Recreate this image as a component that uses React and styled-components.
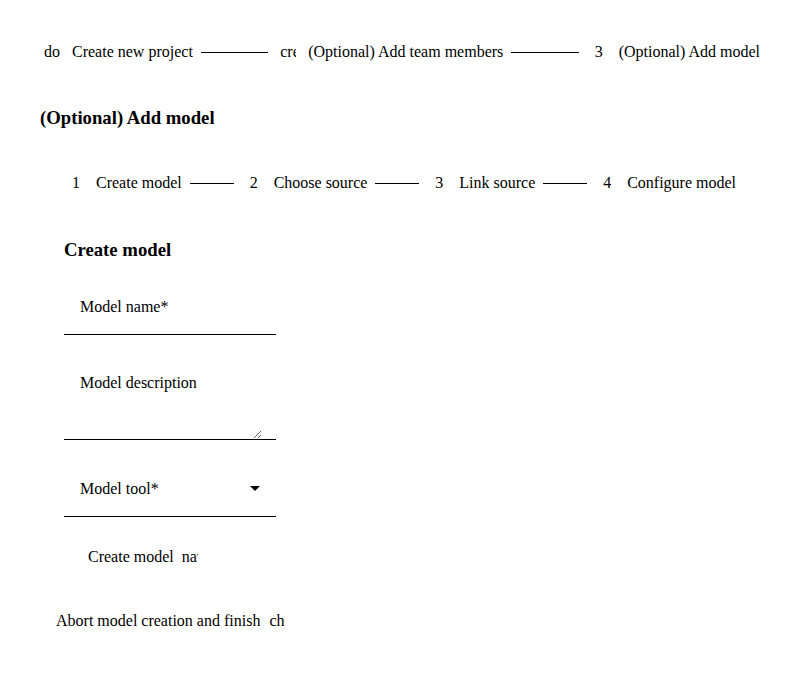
import React from "react";
import styled, { createGlobalStyle } from "styled-components";

const Global = createGlobalStyle`
  html, body { margin: 0; padding: 0; background: #fff; }
  body { font-family: "Liberation Serif", "Times New Roman", serif; color: #000; font-size: 16px; }
`;

const Page = styled.div`
  padding: 16px 40px 0 40px;
  display: flex;
  flex-direction: column;
`;

const Stepper = styled.div`
  display: flex;
  align-items: center;
  height: 72px;
  gap: 8px;
`;

const StepIcon = styled.span`
  width: 24px;
  height: 24px;
  flex: none;
  display: flex;
  align-items: center;
  justify-content: center;
  font-size: 16px;
  line-height: 1;
`;

const IconGlyph = styled.span`
  width: 16px;
  height: 16px;
  overflow: hidden;
  white-space: nowrap;
  display: inline-block;
  font-size: 16px;
  line-height: 16px;
`;

const StepLabel = styled.span`
  white-space: nowrap;
  font-size: 16px;
`;

const Line = styled.span`
  flex: 1;
  height: 1px;
  background: #000;
`;

const Heading = styled.h3`
  margin: ${(p) => p.$top || 0}px 0 ${(p) => p.$bottom || 0}px 0;
  font-size: 18.72px;
  font-weight: bold;
  line-height: 22px;
`;

const Content = styled.div`
  display: flex;
  flex-direction: column;
  padding: 0 24px;
`;

const Field = styled.label`
  width: 212px;
  min-height: 55px;
  border-bottom: 1px solid #000;
  display: flex;
  flex-direction: column;
  margin-bottom: ${(p) => p.$gap || 20}px;
`;

const FieldRow = styled.div`
  height: 55px;
  display: flex;
  align-items: center;
  justify-content: space-between;
  padding: 0 16px;
`;

const FieldLabel = styled.span`
  font-size: 16px;
`;

const Area = styled.textarea`
  border: none;
  outline: none;
  background: transparent;
  resize: vertical;
  height: 29px;
  margin: 0 14px 0 16px;
  padding: 0;
  font: inherit;
  display: block;
`;

const Caret = styled.span`
  width: 0;
  height: 0;
  border-left: 5px solid transparent;
  border-right: 5px solid transparent;
  border-top: 5px solid #000;
`;

const Button = styled.button`
  border: none;
  background: transparent;
  font-family: inherit;
  font-size: 16px;
  color: #000;
  display: inline-flex;
  align-items: center;
  gap: ${(p) => p.$gap || 8}px;
  height: 36px;
  margin-top: ${(p) => p.$top || 0}px;
  padding: 0 ${(p) => p.$pad}px;
  align-self: flex-start;
  cursor: pointer;
`;

const Steps = ({ steps }) => (
  <Stepper>
    {steps.map((s, i) => (
      <React.Fragment key={i}>
        {i > 0 && <Line />}
        <StepIcon>{s.icon ? <IconGlyph>{s.icon}</IconGlyph> : s.num}</StepIcon>
        <StepLabel>{s.label}</StepLabel>
      </React.Fragment>
    ))}
  </Stepper>
);

export default function App() {
  return (
    <>
      <Global />
      <Page>
        <Steps
          steps={[
            { icon: "done", label: "Create new project" },
            { icon: "create", label: "(Optional) Add team members" },
            { num: "3", label: "(Optional) Add model" },
          ]}
        />
        <Heading $top={19} $bottom={18}>(Optional) Add model</Heading>
        <Content>
          <Steps
            steps={[
              { num: "1", label: "Create model" },
              { num: "2", label: "Choose source" },
              { num: "3", label: "Link source" },
              { num: "4", label: "Configure model" },
            ]}
          />
          <Heading $top={20} $bottom={18}>Create model</Heading>
          <Field>
            <FieldRow>
              <FieldLabel>Model name*</FieldLabel>
            </FieldRow>
          </Field>
          <Field $gap={21}>
            <FieldRow>
              <FieldLabel>Model description</FieldLabel>
            </FieldRow>
            <Area />
          </Field>
          <Field>
            <FieldRow>
              <FieldLabel>Model tool*</FieldLabel>
              <Caret />
            </FieldRow>
          </Field>
          <Button $pad={24} $top={2}>
            Create model <IconGlyph>navigate_next</IconGlyph>
          </Button>
        </Content>
        <Button $pad={16} $gap={9} $top={28}>
          Abort model creation and finish <IconGlyph>check</IconGlyph>
        </Button>
      </Page>
    </>
  );
}
